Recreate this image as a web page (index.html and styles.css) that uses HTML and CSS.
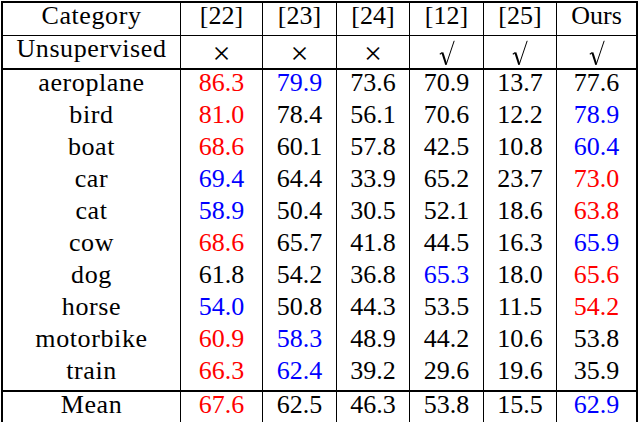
FILE: index.html
```html
<!DOCTYPE html>
<html>
<head>
<meta charset="utf-8">
<link rel="stylesheet" href="styles.css">
</head>
<body>
<table class="results">
  <colgroup>
    <col class="c-cat"><col class="c-22"><col class="c-23"><col class="c-24"><col class="c-12"><col class="c-25"><col class="c-ours">
  </colgroup>
  <thead>
    <tr class="head">
      <th>Category</th><th>[22]</th><th>[23]</th><th>[24]</th><th>[12]</th><th>[25]</th><th>Ours</th>
    </tr>
    <tr class="unsup">
      <th>Unsupervised</th>
      <td><span class="cross">×</span></td>
      <td><span class="cross">×</span></td>
      <td><span class="cross">×</span></td>
      <td><svg class="surd" width="16" height="26" viewBox="0 0 16 26"><path d="M0.8 14.2 L3.4 12.6" stroke="#000" stroke-width="1.2" fill="none"/><path d="M3.4 12.6 L7.2 24.6" stroke="#000" stroke-width="2" fill="none"/><path d="M7.2 24.6 L15.2 0.8" stroke="#000" stroke-width="1" fill="none"/></svg></td>
      <td><svg class="surd" width="16" height="26" viewBox="0 0 16 26"><path d="M0.8 14.2 L3.4 12.6" stroke="#000" stroke-width="1.2" fill="none"/><path d="M3.4 12.6 L7.2 24.6" stroke="#000" stroke-width="2" fill="none"/><path d="M7.2 24.6 L15.2 0.8" stroke="#000" stroke-width="1" fill="none"/></svg></td>
      <td><svg class="surd" width="16" height="26" viewBox="0 0 16 26"><path d="M0.8 14.2 L3.4 12.6" stroke="#000" stroke-width="1.2" fill="none"/><path d="M3.4 12.6 L7.2 24.6" stroke="#000" stroke-width="2" fill="none"/><path d="M7.2 24.6 L15.2 0.8" stroke="#000" stroke-width="1" fill="none"/></svg></td>
    </tr>
  </thead>
  <tbody>
    <tr><th>aeroplane</th><td class="red">86.3</td><td class="blue">79.9</td><td>73.6</td><td>70.9</td><td>13.7</td><td>77.6</td></tr>
    <tr><th>bird</th><td class="red">81.0</td><td>78.4</td><td>56.1</td><td>70.6</td><td>12.2</td><td class="blue">78.9</td></tr>
    <tr><th>boat</th><td class="red">68.6</td><td>60.1</td><td>57.8</td><td>42.5</td><td>10.8</td><td class="blue">60.4</td></tr>
    <tr><th>car</th><td class="blue">69.4</td><td>64.4</td><td>33.9</td><td>65.2</td><td>23.7</td><td class="red">73.0</td></tr>
    <tr><th>cat</th><td class="blue">58.9</td><td>50.4</td><td>30.5</td><td>52.1</td><td>18.6</td><td class="red">63.8</td></tr>
    <tr><th>cow</th><td class="red">68.6</td><td>65.7</td><td>41.8</td><td>44.5</td><td>16.3</td><td class="blue">65.9</td></tr>
    <tr><th>dog</th><td>61.8</td><td>54.2</td><td>36.8</td><td class="blue">65.3</td><td>18.0</td><td class="red">65.6</td></tr>
    <tr><th>horse</th><td class="blue">54.0</td><td>50.8</td><td>44.3</td><td>53.5</td><td>11.5</td><td class="red">54.2</td></tr>
    <tr><th>motorbike</th><td class="red">60.9</td><td class="blue">58.3</td><td>48.9</td><td>44.2</td><td>10.6</td><td>53.8</td></tr>
    <tr class="last"><th>train</th><td class="red">66.3</td><td class="blue">62.4</td><td>39.2</td><td>29.6</td><td>19.6</td><td>35.9</td></tr>
  </tbody>
  <tfoot>
    <tr class="mean"><th>Mean</th><td class="red">67.6</td><td>62.5</td><td>46.3</td><td>53.8</td><td>15.5</td><td class="blue">62.9</td></tr>
  </tfoot>
</table>
</body>
</html>
```
FILE: styles.css
```css
html, body {
  margin: 0;
  padding: 0;
  background: #fff;
}
body {
  padding: 1px 0 0 1px;
}
.results {
  border-collapse: separate;
  border-spacing: 0;
  table-layout: fixed;
  width: 637px;
  border-top: 2px solid #000;
  border-left: 2px solid #000;
  font-family: "Liberation Serif", "DejaVu Serif", serif;
  font-size: 26px;
  color: #000;
}
.c-cat { width: 178px; }
.c-22 { width: 82px; }
.c-23 { width: 74px; }
.c-24 { width: 73px; }
.c-12 { width: 74px; }
.c-25 { width: 73px; }
.c-ours { width: 81px; }
.results th, .results td {
  box-sizing: border-box;
  font-family: "Liberation Serif", "DejaVu Serif", serif;
  font-weight: normal;
  text-align: center;
  line-height: 26px;
  padding: 0 0 6px 0;
  border-right: 1px solid #000;
  white-space: nowrap;
}
.results th:first-child {
  letter-spacing: 0.6px;
}
.results tr > :last-child {
  border-right: 2px solid #000;
}
.head > * {
  padding: 2px 0 2px 0;
  border-bottom: 1px solid #000;
}
.unsup > * {
  padding: 1px 0 5px 0;
  border-bottom: 2px solid #000;
  height: 34px;
  vertical-align: top;
}
.unsup td {
  vertical-align: top;
  padding: 0;
}
.cross {
  display: block;
  font-size: 32px;
  line-height: 30px;
  padding-top: 2px;
}
.surd {
  display: block;
  margin: 4px auto 0;
}
.last > * {
  border-bottom: 2px solid #000;
}
.mean > * {
  padding: 0 0 3px 0;
  border-bottom: 2px solid #000;
}
.red { color: #ff0000; }
.blue { color: #0000ff; }
```
